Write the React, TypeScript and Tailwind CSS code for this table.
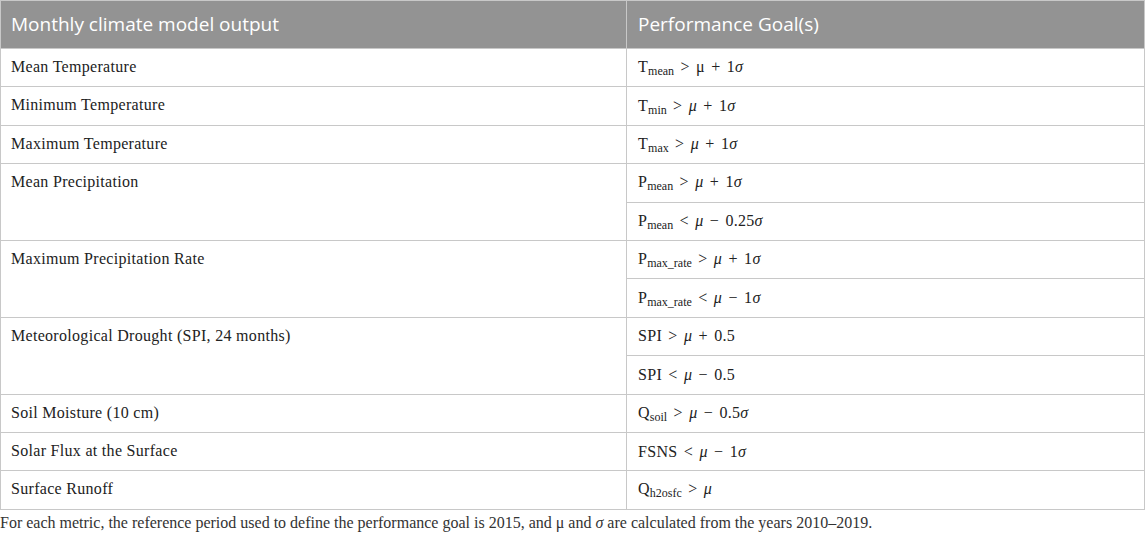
const serif = { fontFamily: '"Liberation Serif", "DejaVu Serif", serif' };

type Goal = { sym: string; sub?: string; rest: React.ReactNode };

const mu = <i>μ</i>;
const sigma = <i>σ</i>;

const rows: { label: string; goals: Goal[] }[] = [
  { label: 'Mean Temperature', goals: [{ sym: 'T', sub: 'mean', rest: <> &gt; μ + 1{sigma}</> }] },
  { label: 'Minimum Temperature', goals: [{ sym: 'T', sub: 'min', rest: <> &gt; {mu} + 1{sigma}</> }] },
  { label: 'Maximum Temperature', goals: [{ sym: 'T', sub: 'max', rest: <> &gt; {mu} + 1{sigma}</> }] },
  {
    label: 'Mean Precipitation',
    goals: [
      { sym: 'P', sub: 'mean', rest: <> &gt; {mu} + 1{sigma}</> },
      { sym: 'P', sub: 'mean', rest: <> &lt; {mu} − 0.25{sigma}</> },
    ],
  },
  {
    label: 'Maximum Precipitation Rate',
    goals: [
      { sym: 'P', sub: 'max_rate', rest: <> &gt; {mu} + 1{sigma}</> },
      { sym: 'P', sub: 'max_rate', rest: <> &lt; {mu} − 1{sigma}</> },
    ],
  },
  {
    label: 'Meteorological Drought (SPI, 24 months)',
    goals: [
      { sym: 'SPI', rest: <> &gt; {mu} + 0.5</> },
      { sym: 'SPI', rest: <> &lt; {mu} − 0.5</> },
    ],
  },
  { label: 'Soil Moisture (10 cm)', goals: [{ sym: 'Q', sub: 'soil', rest: <> &gt; {mu} − 0.5{sigma}</> }] },
  { label: 'Solar Flux at the Surface', goals: [{ sym: 'FSNS', rest: <> &lt; {mu} − 1{sigma}</> }] },
  { label: 'Surface Runoff', goals: [{ sym: 'Q', sub: 'h2osfc', rest: <> &gt; {mu}</> }] },
];

function GoalText({ g }: { g: Goal }) {
  return (
    <span className="[word-spacing:2px]">
      {g.sym}
      {g.sub && <span className="text-[12px] relative top-[3px] tracking-normal">{g.sub}</span>}
      {g.rest}
    </span>
  );
}

export default function App() {
  return (
    <div className="w-[1145px] h-[535px] bg-white text-[#222]" style={serif}>
      <table className="w-full border-collapse border border-[#c8c8c8]">
        <thead>
          <tr className="h-[48px] bg-[#939393] text-white text-[19px]" style={{ fontFamily: '"Open Sans", "Noto Sans", sans-serif' }}>
            <th className="w-[626px] text-left font-normal pl-[10px] border-r border-[#c8c8c8]">
              Monthly climate model output
            </th>
            <th className="text-left font-normal pl-[11px]">Performance Goal(s)</th>
          </tr>
        </thead>
        <tbody className="text-[16px] tracking-[0.3px]">
          {rows.map((r) =>
            r.goals.map((g, i) => (
              <tr key={r.label + i} className="h-[38.4px]">
                {i === 0 && (
                  <td
                    rowSpan={r.goals.length}
                    className="align-top pl-[10px] pt-[8px] border border-[#c8c8c8] leading-[20px]"
                  >
                    {r.label}
                  </td>
                )}
                <td className="pl-[11px] border border-[#c8c8c8] leading-[20px] whitespace-nowrap">
                  <GoalText g={g} />
                </td>
              </tr>
            ))
          )}
        </tbody>
      </table>
      <p className="text-[16px] text-[#333] mt-[3px] leading-[20px]">
        For each metric, the reference period used to define the performance goal is 2015, and μ and <i>σ</i> are
        calculated from the years 2010–2019.
      </p>
    </div>
  );
}
